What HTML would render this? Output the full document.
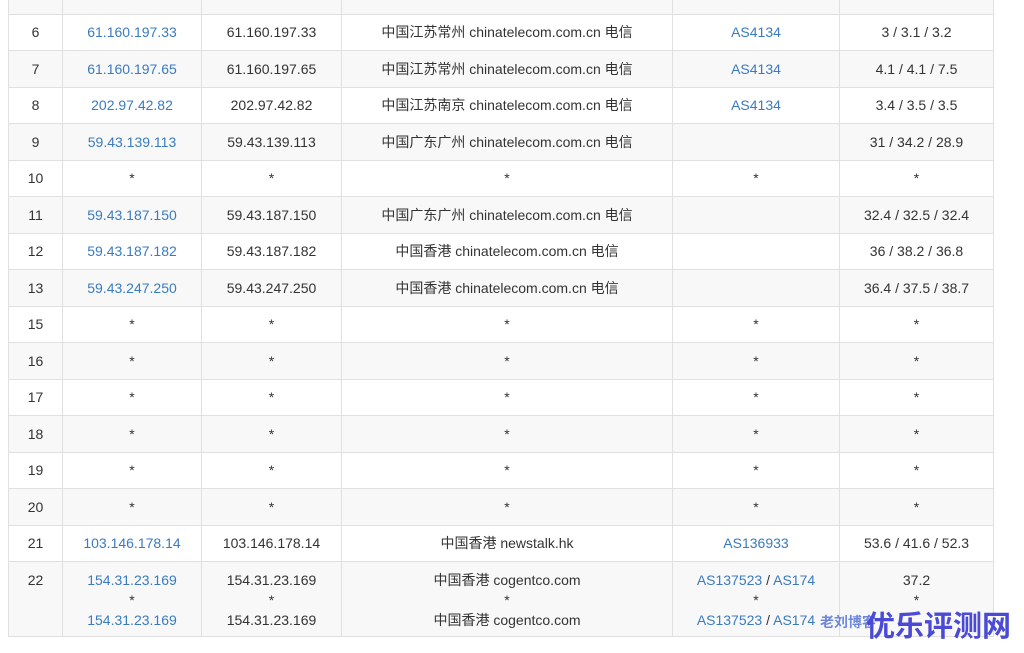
<!DOCTYPE html>
<html><head><meta charset="utf-8"><style>
body{margin:0;background:#fff;width:1024px;height:653px;overflow:hidden;position:relative;font-family:"Liberation Sans","Noto Sans CJK SC",sans-serif;font-size:14px;color:#333}
table{position:absolute;left:8px;top:-23px;border-collapse:collapse;width:986px}
td{border:1px solid #e0e0e0;text-align:center;height:35.5px;padding:0;line-height:18px}
tr:nth-child(odd) td{background:#f8f8f8}
tr.last td{height:66px;vertical-align:top;padding-top:8px;line-height:20px}
a{color:#3a7bbf;text-decoration:none}
.c1{width:53px}.c2{width:138px}.c3{width:139px}.c4{width:330px}.c5{width:166px}
.wm{position:absolute;left:866px;top:606px;font:bold 29px "Noto Sans CJK SC",sans-serif;color:#4a4ad6;white-space:nowrap;line-height:36px}
.wm2{position:absolute;left:820px;top:612px;font:bold 14px "Noto Sans CJK SC",sans-serif;color:#4a6ad6;opacity:.8;white-space:nowrap}
</style></head><body>
<table>
<tr><td class="c1"></td><td class="c2"></td><td class="c3"></td><td class="c4"></td><td class="c5"></td><td></td></tr>
<tr><td>6</td><td><a>61.160.197.33</a></td><td>61.160.197.33</td><td>中国江苏常州 chinatelecom.com.cn 电信</td><td><a>AS4134</a></td><td>3 / 3.1 / 3.2</td></tr>
<tr><td>7</td><td><a>61.160.197.65</a></td><td>61.160.197.65</td><td>中国江苏常州 chinatelecom.com.cn 电信</td><td><a>AS4134</a></td><td>4.1 / 4.1 / 7.5</td></tr>
<tr><td>8</td><td><a>202.97.42.82</a></td><td>202.97.42.82</td><td>中国江苏南京 chinatelecom.com.cn 电信</td><td><a>AS4134</a></td><td>3.4 / 3.5 / 3.5</td></tr>
<tr><td>9</td><td><a>59.43.139.113</a></td><td>59.43.139.113</td><td>中国广东广州 chinatelecom.com.cn 电信</td><td></td><td>31 / 34.2 / 28.9</td></tr>
<tr><td>10</td><td>*</td><td>*</td><td>*</td><td>*</td><td>*</td></tr>
<tr><td>11</td><td><a>59.43.187.150</a></td><td>59.43.187.150</td><td>中国广东广州 chinatelecom.com.cn 电信</td><td></td><td>32.4 / 32.5 / 32.4</td></tr>
<tr><td>12</td><td><a>59.43.187.182</a></td><td>59.43.187.182</td><td>中国香港 chinatelecom.com.cn 电信</td><td></td><td>36 / 38.2 / 36.8</td></tr>
<tr><td>13</td><td><a>59.43.247.250</a></td><td>59.43.247.250</td><td>中国香港 chinatelecom.com.cn 电信</td><td></td><td>36.4 / 37.5 / 38.7</td></tr>
<tr><td>15</td><td>*</td><td>*</td><td>*</td><td>*</td><td>*</td></tr>
<tr><td>16</td><td>*</td><td>*</td><td>*</td><td>*</td><td>*</td></tr>
<tr><td>17</td><td>*</td><td>*</td><td>*</td><td>*</td><td>*</td></tr>
<tr><td>18</td><td>*</td><td>*</td><td>*</td><td>*</td><td>*</td></tr>
<tr><td>19</td><td>*</td><td>*</td><td>*</td><td>*</td><td>*</td></tr>
<tr><td>20</td><td>*</td><td>*</td><td>*</td><td>*</td><td>*</td></tr>
<tr><td>21</td><td><a>103.146.178.14</a></td><td>103.146.178.14</td><td>中国香港 newstalk.hk</td><td><a>AS136933</a></td><td>53.6 / 41.6 / 52.3</td></tr>
<tr class="last"><td>22</td><td><a>154.31.23.169</a><br>*<br><a>154.31.23.169</a></td><td>154.31.23.169<br>*<br>154.31.23.169</td><td>中国香港 cogentco.com<br>*<br>中国香港 cogentco.com</td><td><a>AS137523</a> / <a>AS174</a><br>*<br><a>AS137523</a> / <a>AS174</a></td><td>37.2<br>*<br>&nbsp;</td></tr>
</table>
<div class="wm2">老刘博客</div>
<div class="wm">优乐评测网</div>
</body></html>
